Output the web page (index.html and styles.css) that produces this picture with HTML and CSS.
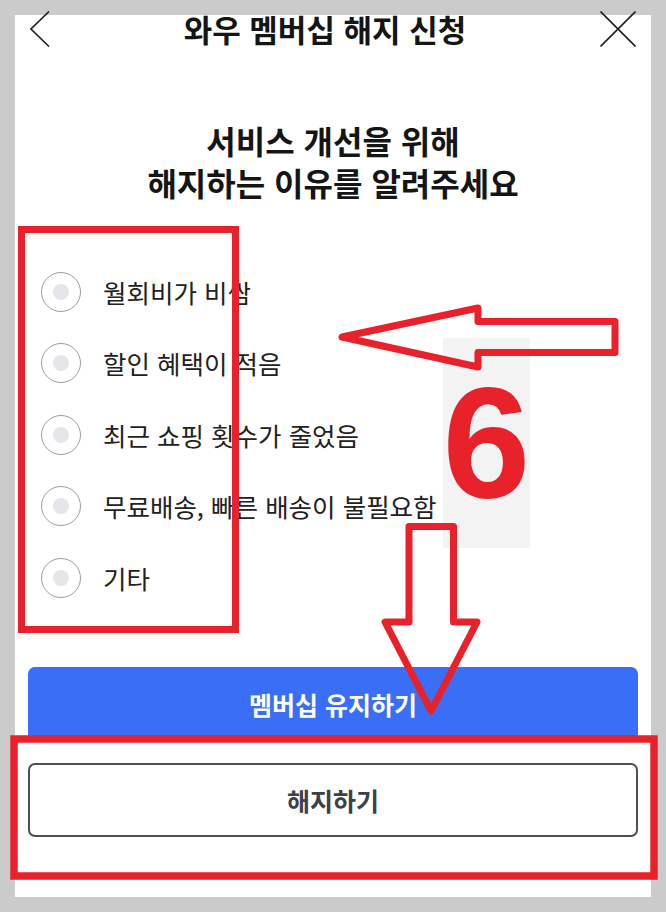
FILE: index.html
```html
<!DOCTYPE html>
<html lang="ko">
<head>
<meta charset="utf-8">
<title>와우 멤버십 해지 신청</title>
<link rel="stylesheet" href="styles.css">
</head>
<body>
<div class="page">
  <div class="panel">
    <header class="topbar">
      <svg class="icon-back" width="20" height="36" viewBox="0 0 20 36"><polyline points="19,0.5 1,18 19,35.5" fill="none" stroke="#222" stroke-width="1.6"/></svg>
      <h1 class="title">와우 멤버십 해지 신청</h1>
      <svg class="icon-close" width="36" height="36" viewBox="0 0 36 36"><path d="M0.5 0.5 L35.5 35.5 M35.5 0.5 L0.5 35.5" fill="none" stroke="#222" stroke-width="1.6"/></svg>
    </header>

    <h2 class="heading">서비스 개선을 위해<br>해지하는 이유를 알려주세요</h2>

    <ul class="reasons">
      <li class="reason"><span class="radio"></span><span class="label">월회비가 비쌈</span></li>
      <li class="reason"><span class="radio"></span><span class="label">할인 혜택이 적음</span></li>
      <li class="reason"><span class="radio"></span><span class="label">최근 쇼핑 횟수가 줄었음</span></li>
      <li class="reason"><span class="radio"></span><span class="label">무료배송, 빠른 배송이 불필요함</span></li>
      <li class="reason"><span class="radio"></span><span class="label">기타</span></li>
    </ul>

    <div class="actions">
      <button class="btn btn-primary">멤버십 유지하기</button>
      <button class="btn btn-outline">해지하기</button>
    </div>
  </div>

  <div class="step-badge"><span class="step-num">6</span></div>

  <svg class="annotations" width="666" height="912" viewBox="0 0 666 912">
    <g fill="none" stroke="#e8212b" stroke-linejoin="miter">
      <rect x="21.5" y="229.5" width="214" height="400" stroke-width="7"/>
      <rect x="14" y="739" width="640" height="137" stroke-width="7.5"/>
      <polygon points="342,337 478,308 478,321.5 615,321.5 615,352.5 478,352.5 478,367" stroke-width="7" stroke-linejoin="round"/>
      <polygon points="409,526.5 453.5,526.5 453.5,622 477,622 431,711 385,622 409,622" stroke-width="7" stroke-linejoin="round"/>
    </g>
  </svg>
</div>
</body>
</html>
```

FILE: styles.css
```css
* { box-sizing: border-box; }

html, body {
  margin: 0;
  padding: 0;
}

body {
  background: #cbcbcb;
  font-family: "Noto Sans CJK KR", "Noto Sans", sans-serif;
  color: #1c1c1c;
}

.page {
  position: relative;
  width: 666px;
  height: 912px;
  padding: 15px 15px 0 15px;
}

.panel {
  background: #fff;
  width: 636px;
  height: 882px;
  padding: 0 13px;
  display: flex;
  flex-direction: column;
}

.topbar {
  margin: -4px -13px 0;
  padding: 0 15px;
  height: 36px;
  display: flex;
  align-items: center;
  justify-content: space-between;
}

.icon-back, .icon-close {
  display: block;
  flex: none;
}

.title {
  margin: 0;
  font-size: 31px;
  font-weight: 700;
  line-height: 36px;
  color: #151515;
  white-space: nowrap;
}

.heading {
  margin: 72px 0 0;
  text-align: center;
  font-size: 32px;
  font-weight: 700;
  line-height: 42px;
  color: #151515;
}

.reasons {
  list-style: none;
  margin: 53px 0 0;
  padding: 0;
}

.reason {
  height: 71.5px;
  display: flex;
  align-items: center;
  padding-left: 13px;
}

.radio {
  width: 40px;
  height: 40px;
  border-radius: 50%;
  border: 1.8px solid #9d9d9d;
  display: flex;
  align-items: center;
  justify-content: center;
  flex: none;
}

.radio::after {
  content: "";
  width: 16px;
  height: 16px;
  border-radius: 50%;
  background: #e4e6ea;
}

.label {
  margin-left: 22px;
  font-size: 25.5px;
  line-height: 30px;
  color: #222;
  white-space: nowrap;
}

.actions {
  margin-top: 53.5px;
  display: flex;
  flex-direction: column;
  gap: 22px;
}

.btn {
  display: block;
  width: 100%;
  height: 74px;
  border-radius: 7px;
  font-family: inherit;
  font-size: 25px;
  font-weight: 700;
  cursor: pointer;
}

.btn-primary {
  background: #3a6ef7;
  color: #fff;
  border: none;
}

.btn-outline {
  background: #fff;
  color: #3d4048;
  border: 2px solid #4b4f58;
}

.step-badge {
  position: absolute;
  left: 443px;
  top: 338px;
  width: 87px;
  height: 210px;
  background: #f3f3f3;
  display: flex;
  justify-content: center;
}

.step-num {
  font-family: "Liberation Sans", Arial, sans-serif;
  font-weight: 700;
  font-size: 158px;
  line-height: 1;
  color: #e8212b;
  margin-top: 25px;
}

.annotations {
  position: absolute;
  left: 0;
  top: 0;
  pointer-events: none;
}
```
